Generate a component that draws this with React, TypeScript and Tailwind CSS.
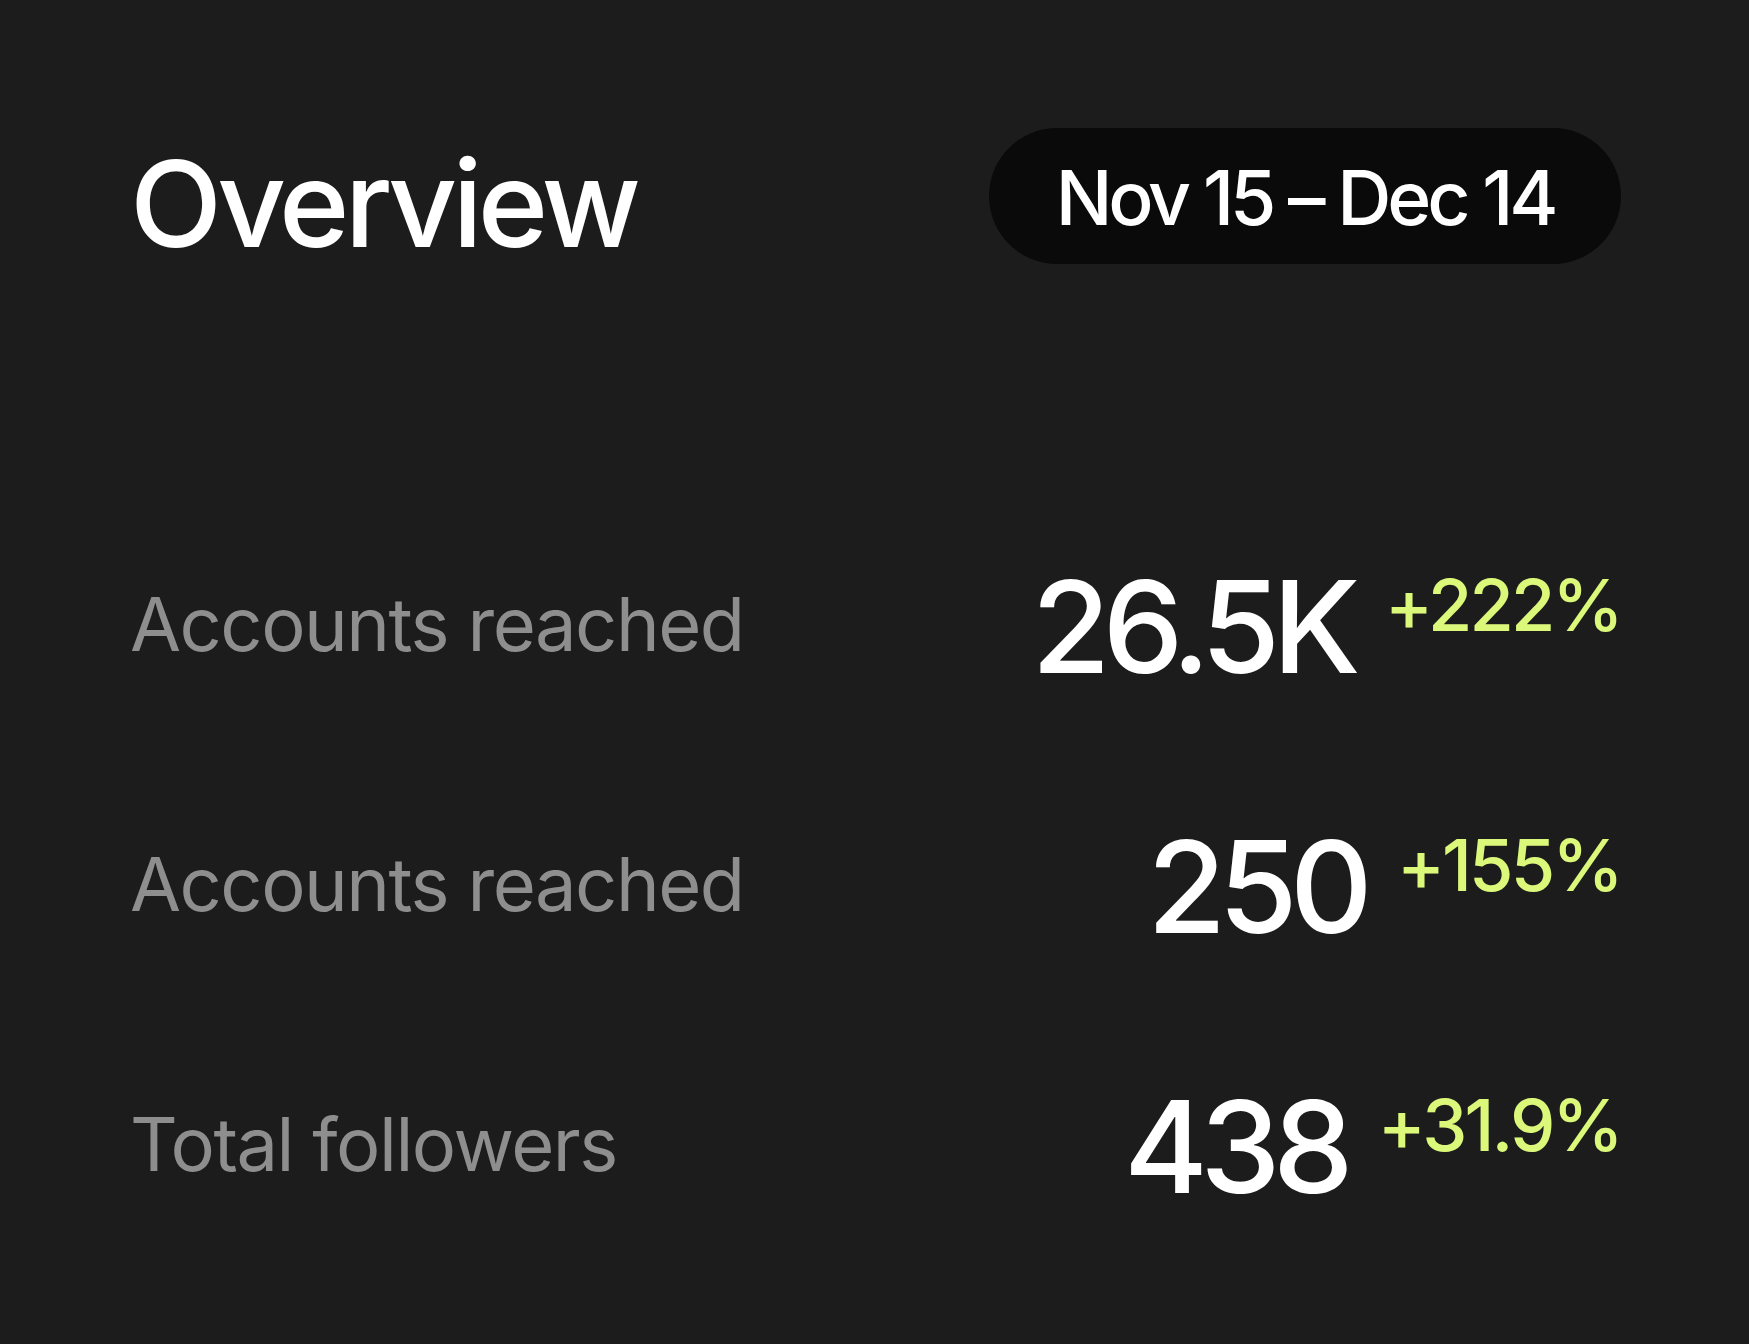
import React from 'react'

interface Stat {
  label:  string
  value:  string
  change: string
}

const stats: Stat[] = [
  { label: 'Accounts reached', value: '26.5K', change: '+222%' },
  { label: 'Accounts reached', value: '250',   change: '+155%' },
  { label: 'Total followers',  value: '438',   change: '+31.9%' },
]

export default function App() {
  return (
    <div
      className="min-h-screen w-full bg-[#1c1c1c] px-[128px] pt-[128px] text-white"
      style={{ fontFamily: 'Inter, "Noto Sans", sans-serif' }}
    >
      {/* header */}
      <div className="flex h-[136px] items-center justify-between">
        <h1 className="pt-[16px] pl-[2px] text-[120px] leading-none font-medium tracking-[-0.04em]">Overview</h1>
        <div className="flex h-[136px] w-[632px] items-center justify-center rounded-full bg-[#0a0a0a]">
          <span className="pt-[2px] text-[75px] leading-none font-medium tracking-[-0.055em]">Nov 15 – Dec 14</span>
        </div>
      </div>

      {/* stat rows */}
      <div className="mt-[232px] flex flex-col">
        {stats.map((s, i) => (
          <div key={i} className="flex h-[260px] items-center justify-between">
            <span className="mb-[4px] pl-[2px] text-[74px] leading-none tracking-[-0.02em] text-[#8e8e8e]">{s.label}</span>
            <div className="mb-[10px] flex items-start gap-[32px]">
              <span className="pt-[11px] text-[128px] leading-none font-medium tracking-[-0.06em]">{s.value}</span>
              <span className="pt-[17px] text-[72px] leading-none font-medium tracking-[-0.04em] text-[#dbf87a]">{s.change}</span>
            </div>
          </div>
        ))}
      </div>
    </div>
  )
}
